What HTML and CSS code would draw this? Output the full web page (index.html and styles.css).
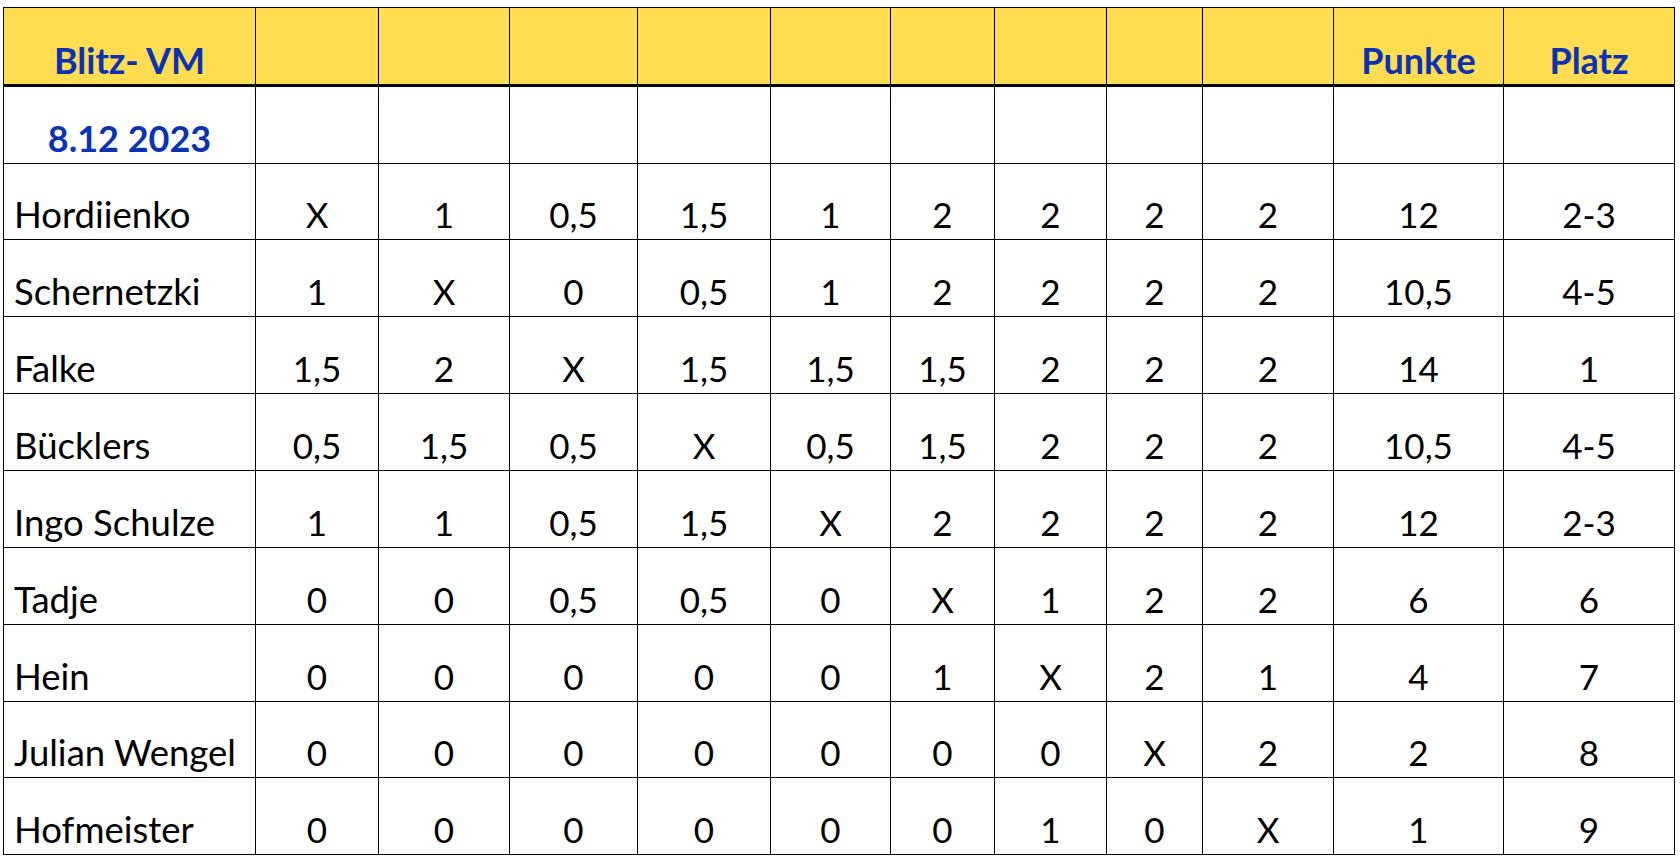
FILE: index.html
```html
<!DOCTYPE html>
<html lang="de">
<head>
<meta charset="utf-8">
<title>Blitz- VM 8.12 2023</title>
<link rel="stylesheet" href="styles.css">
</head>
<body>
<div class="sheet">
  <div class="grid">
    <div class="c h">Blitz- VM</div>
    <div class="c h"></div><div class="c h"></div><div class="c h"></div><div class="c h"></div><div class="c h"></div>
    <div class="c h"></div><div class="c h"></div><div class="c h"></div><div class="c h"></div>
    <div class="c h">Punkte</div>
    <div class="c h">Platz</div>

    <div class="c date">8.12 2023</div>
    <div class="c"></div><div class="c"></div><div class="c"></div><div class="c"></div><div class="c"></div>
    <div class="c"></div><div class="c"></div><div class="c"></div><div class="c"></div>
    <div class="c"></div><div class="c"></div>

    <div class="c n">Hordiienko</div>
    <div class="c">X</div><div class="c">1</div><div class="c">0,5</div><div class="c">1,5</div><div class="c">1</div><div class="c">2</div><div class="c">2</div><div class="c">2</div><div class="c">2</div><div class="c">12</div><div class="c">2-3</div>

    <div class="c n">Schernetzki</div>
    <div class="c">1</div><div class="c">X</div><div class="c">0</div><div class="c">0,5</div><div class="c">1</div><div class="c">2</div><div class="c">2</div><div class="c">2</div><div class="c">2</div><div class="c">10,5</div><div class="c">4-5</div>

    <div class="c n">Falke</div>
    <div class="c">1,5</div><div class="c">2</div><div class="c">X</div><div class="c">1,5</div><div class="c">1,5</div><div class="c">1,5</div><div class="c">2</div><div class="c">2</div><div class="c">2</div><div class="c">14</div><div class="c">1</div>

    <div class="c n">Bücklers</div>
    <div class="c">0,5</div><div class="c">1,5</div><div class="c">0,5</div><div class="c">X</div><div class="c">0,5</div><div class="c">1,5</div><div class="c">2</div><div class="c">2</div><div class="c">2</div><div class="c">10,5</div><div class="c">4-5</div>

    <div class="c n">Ingo Schulze</div>
    <div class="c">1</div><div class="c">1</div><div class="c">0,5</div><div class="c">1,5</div><div class="c">X</div><div class="c">2</div><div class="c">2</div><div class="c">2</div><div class="c">2</div><div class="c">12</div><div class="c">2-3</div>

    <div class="c n">Tadje</div>
    <div class="c">0</div><div class="c">0</div><div class="c">0,5</div><div class="c">0,5</div><div class="c">0</div><div class="c">X</div><div class="c">1</div><div class="c">2</div><div class="c">2</div><div class="c">6</div><div class="c">6</div>

    <div class="c n">Hein</div>
    <div class="c">0</div><div class="c">0</div><div class="c">0</div><div class="c">0</div><div class="c">0</div><div class="c">1</div><div class="c">X</div><div class="c">2</div><div class="c">1</div><div class="c">4</div><div class="c">7</div>

    <div class="c n">Julian Wengel</div>
    <div class="c">0</div><div class="c">0</div><div class="c">0</div><div class="c">0</div><div class="c">0</div><div class="c">0</div><div class="c">0</div><div class="c">X</div><div class="c">2</div><div class="c">2</div><div class="c">8</div>

    <div class="c n">Hofmeister</div>
    <div class="c">0</div><div class="c">0</div><div class="c">0</div><div class="c">0</div><div class="c">0</div><div class="c">0</div><div class="c">1</div><div class="c">0</div><div class="c">X</div><div class="c">1</div><div class="c">9</div>
  </div>
</div>
</body>
</html>
```

FILE: styles.css
```css
html, body {
  margin: 0;
  padding: 0;
  background: #ffffff;
}

.sheet {
  padding: 7px 0 0 3px;
}

.grid {
  display: grid;
  grid-template-columns: 252px 123px 131px 128px 133px 120px 104px 112px 96px 131px 170px 171px;
  grid-template-rows: 79px 77px 76px 77px 77px 77px 77px 77px 77px 76px 77px;
  width: max-content;
  border-left: 1px solid #000;
  border-top: 1px solid #000;
  font-family: Lato, "Liberation Sans", sans-serif;
  font-size: 35px;
  color: #000;
}

.c {
  box-sizing: border-box;
  border-right: 1px solid #000;
  border-bottom: 1px solid #000;
  display: flex;
  align-items: flex-end;
  justify-content: center;
  line-height: 1;
  padding-bottom: 7px;
  white-space: nowrap;
}

.c.h {
  background: #ffdc50;
  border-bottom: 3px solid #000;
  color: #0a32b4;
  font-weight: 700;
  font-size: 36px;
  padding-bottom: 6px;
}

.c.date {
  color: #0a32b4;
  font-weight: 700;
  font-size: 36px;
  padding-bottom: 7px;
}

.c.n {
  justify-content: flex-start;
  padding-left: 10px;
  font-size: 36.5px;
}
```
